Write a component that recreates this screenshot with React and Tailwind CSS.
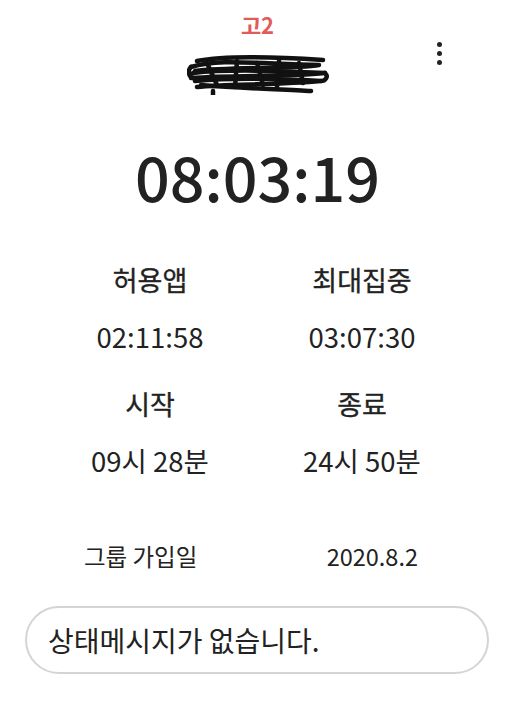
import React from 'react';

const FONT = { fontFamily: '"Noto Sans CJK KR", "Noto Sans", sans-serif' };

// redacted name: a hand scribble over it
const Scribble = () => (
    <svg width="142" height="44" viewBox="0 0 142 44" fill="none" stroke="#111" strokeWidth="4.5" strokeLinecap="round" strokeLinejoin="round">
        <path d="M10 10 C 40 4, 90 6, 136 9" />
        <path d="M4 16 C 30 8, 60 12, 132 14 C 110 18, 40 16, 8 20" />
        <path d="M6 22 C 40 18, 100 20, 138 22 C 100 26, 50 24, 4 27" />
        <path d="M8 30 C 50 26, 100 28, 134 30 C 90 34, 40 33, 10 36" />
        <path d="M14 34 C 60 38, 100 38, 124 40" />
        <path d="M4 16 C 0 20, 2 26, 6 27 M 138 22 C 142 26, 138 30, 134 30" />
        <path d="M20 12 L 30 34 M 50 10 L 48 36 M 70 12 L 76 34 M 92 10 L 90 36 M 112 12 L 116 32" />
        <path d="M26 40 L 26 44" />
    </svg>
);

const Stat = ({ label, value }) => (
    <div className="flex flex-col items-center">
        <div className="text-[27px] leading-[34px] text-[#222] [-webkit-text-stroke:0.35px_#222]">{label}</div>
        <div className="mt-[22px] text-[27.5px] leading-[34px] text-[#222]">{value}</div>
    </div>
);

export default function App() {
    return (
        <div className="relative w-[515px] h-[708px] bg-white overflow-hidden" style={FONT}>
            <div className="pt-[9px] text-center text-[22px] font-bold leading-[30px] text-[#e25b5b]">고2</div>

            <div className="mt-[12px] flex justify-center">
                <Scribble />
            </div>

            {/* kebab menu */}
            <div className="absolute left-[437px] top-[42px] flex flex-col gap-[4px]">
                <span className="block w-[5px] h-[5px] rounded-full bg-[#222]" />
                <span className="block w-[5px] h-[5px] rounded-full bg-[#222]" />
                <span className="block w-[5px] h-[5px] rounded-full bg-[#222]" />
            </div>

            <div className="mt-[43px] text-center text-[61px] font-medium leading-[76px] text-[#222]">08:03:19</div>

            <div className="mt-[49px] ml-[44px] w-[424px] grid grid-cols-2 gap-y-[34px]">
                <Stat label="허용앱" value="02:11:58" />
                <Stat label="최대집중" value="03:07:30" />
                <Stat label="시작" value="09시 28분" />
                <Stat label="종료" value="24시 50분" />
            </div>

            <div className="mt-[64px] flex items-center text-[23.5px] leading-[30px] text-[#222]">
                <span className="ml-[84px]">그룹 가입일</span>
                <span className="ml-auto mr-[97px]">2020.8.2</span>
            </div>

            <div className="mt-[35px] ml-[25px] w-[464px] h-[68px] rounded-[34px] border-2 border-[#d4d4d4] flex items-center pl-[21px]">
                <span className="text-[28px] leading-[36px] text-[#222]">상태메시지가 없습니다.</span>
            </div>
        </div>
    );
}
